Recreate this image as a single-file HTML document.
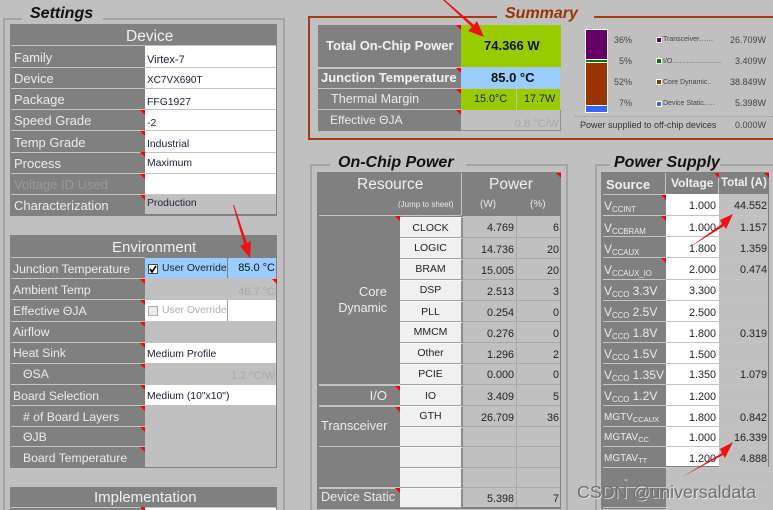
<!DOCTYPE html>
<html><head><meta charset="utf-8"><style>
html,body{margin:0;padding:0;background:#c0c0c0}
#p{position:absolute;left:0;top:0;width:773px;height:510px;overflow:hidden;background:#c0c0c0;font-family:"Liberation Sans",sans-serif;filter:blur(.3px)}
#p div{position:absolute;white-space:nowrap;box-sizing:border-box}
.g{border:2px solid #a4a4a4}
.h{background:#808080}
.w{background:#fff}
.s{background:#c4c4c4;height:1px}
.v{background:#c4c4c4;width:1px}
.ti{font:italic bold 16px/18px "Liberation Sans",sans-serif;color:#111;background:#c0c0c0;padding:0 8px}
.hd{color:#f0f0f0;font-size:15.5px;line-height:18px}
.l{color:#ececec;font-size:13px;line-height:16px;margin-top:-8px}
.e{font-size:12.2px}
.d{color:#20203a;font-size:10.4px;line-height:14px;margin-top:-7px}
.n{color:#222;font-size:10.8px;line-height:14px;margin-top:-7px;text-align:right}
.q{color:#a8a8a8;font-size:11px;line-height:14px;margin-top:-7px}
.c{width:0;height:0;border-left:5px solid transparent;border-top:5px solid #f00}
.bt{background:#f0f0f0;border-right:2px solid #8c8c8c;border-bottom:1px solid #a0a0a0;border-top:1px solid #fafafa;color:#222;font-size:10.5px;text-align:center;left:400px;width:63px}
.sl{color:#ececec;font-size:12px;line-height:16px;margin-top:-8px;left:604px}
.sl sub{font-size:7.8px;line-height:0;vertical-align:-2px}
.m{font-size:10px}
.m sub{font-size:7.5px}
.k{font-size:7px;line-height:10px;margin-top:-5px;color:#444;left:663px}
.p{font-size:9px;line-height:14px;margin-top:-7px;color:#444;text-align:right}
.dot{left:656px;border:1px solid #fff;width:6px;height:6px}
</style></head><body><div id="p">

<!-- Settings group -->
<div class="g" style="left:3px;top:18px;width:282px;height:500px"></div>
<div class="ti" style="left:22px;top:5px;padding-right:10px">Settings</div>

<!-- Device -->
<div class="h" style="left:10px;top:24px;width:267px;height:192px"></div>
<div class="hd" style="left:126px;top:28px">Device</div>
<div class="w" style="left:145px;top:46px;width:131px;height:127px"></div>
<div class="w" style="left:145px;top:173px;width:131px;height:21px"></div>
<div style="left:145px;top:195px;width:131px;height:19px;background:#c0c0c0"></div>
<div class="s" style="left:11px;top:45px;width:265px"></div>
<div class="s" style="left:11px;top:67px;width:265px"></div>
<div class="s" style="left:11px;top:88px;width:265px"></div>
<div class="s" style="left:11px;top:109px;width:265px"></div>
<div class="s" style="left:11px;top:130px;width:265px"></div>
<div class="s" style="left:11px;top:152px;width:265px"></div>
<div class="s" style="left:11px;top:173px;width:265px"></div>
<div class="s" style="left:11px;top:194px;width:265px"></div>
<div class="l" style="left:14px;top:58px">Family</div>
<div class="l" style="left:14px;top:79px">Device</div>
<div class="l" style="left:14px;top:100px">Package</div>
<div class="l" style="left:14px;top:121px">Speed Grade</div>
<div class="l" style="left:14px;top:143px">Temp Grade</div>
<div class="l" style="left:14px;top:164px">Process</div>
<div class="l" style="left:14px;top:185px;color:#999">Voltage ID Used</div>
<div class="l" style="left:14px;top:206px">Characterization</div>
<div class="d" style="left:147px;top:60px;font-size:11px">Virtex-7</div>
<div class="d" style="left:147px;top:81px;font-size:10px">XC7VX690T</div>
<div class="d" style="left:147px;top:103px">FFG1927</div>
<div class="d" style="left:147px;top:124px">-2</div>
<div class="d" style="left:147px;top:145px">Industrial</div>
<div class="d" style="left:147px;top:164px">Maximum</div>
<div class="d" style="left:147px;top:204px">Production</div>
<div class="c" style="left:140px;top:110px"></div>
<div class="c" style="left:140px;top:131px"></div>
<div class="c" style="left:140px;top:152px"></div>
<div class="c" style="left:140px;top:174px"></div>
<div class="c" style="left:140px;top:195px"></div>

<!-- Environment -->
<div class="h" style="left:10px;top:235px;width:267px;height:233px"></div>
<div class="hd" style="left:112px;top:239px;font-size:15px">Environment</div>
<div style="left:145px;top:258px;width:131px;height:209px;background:#c0c0c0"></div>
<div style="left:145px;top:258px;width:131px;height:20px;background:#99ccff"></div>
<div class="v" style="left:227px;top:258px;height:20px;background:#808080"></div>
<div class="w" style="left:145px;top:300px;width:131px;height:21px"></div>
<div class="v" style="left:227px;top:300px;height:21px;background:#a0a0a0"></div>
<div class="w" style="left:145px;top:343px;width:131px;height:20px"></div>
<div class="w" style="left:145px;top:385px;width:131px;height:20px"></div>
<div class="s" style="left:11px;top:257px;width:134px"></div>
<div class="s" style="left:11px;top:278px;width:134px"></div>
<div class="s" style="left:11px;top:299px;width:134px"></div>
<div class="s" style="left:11px;top:321px;width:134px"></div>
<div class="s" style="left:11px;top:342px;width:134px"></div>
<div class="s" style="left:11px;top:363px;width:134px"></div>
<div class="s" style="left:11px;top:384px;width:134px"></div>
<div class="s" style="left:11px;top:405px;width:134px"></div>
<div class="s" style="left:11px;top:426px;width:134px"></div>
<div class="s" style="left:11px;top:446px;width:134px"></div>
<div class="l e" style="left:13px;top:269px">Junction Temperature</div>
<div class="l e" style="left:13px;top:290px">Ambient Temp</div>
<div class="l e" style="left:13px;top:311px">Effective ΘJA</div>
<div class="l e" style="left:13px;top:332px">Airflow</div>
<div class="l e" style="left:13px;top:353px">Heat Sink</div>
<div class="l e" style="left:23px;top:374px">ΘSA</div>
<div class="l e" style="left:13px;top:396px">Board Selection</div>
<div class="l e" style="left:23px;top:417px"># of Board Layers</div>
<div class="l e" style="left:23px;top:437px">ΘJB</div>
<div class="l e" style="left:23px;top:458px">Board Temperature</div>
<div style="left:148px;top:264px;width:10px;height:10px;background:#fff;border:1px solid #444"></div>
<svg style="position:absolute;left:148px;top:264px" width="10" height="10"><path d="M2 5l2 3 4-6" fill="none" stroke="#000" stroke-width="1.6"/></svg>
<div class="d" style="left:162px;top:269px;color:#222">User Override</div>
<div class="d" style="right:498px;top:268px;font-size:11px;color:#111">85.0 °C</div>
<div class="q" style="right:498px;top:292px">46.7 °C</div>
<div style="left:148px;top:306px;width:10px;height:10px;background:#ececec;border:1px solid #b0b0b0"></div>
<div class="d" style="left:162px;top:311px;color:#a8b0b0">User Override</div>
<div class="d" style="left:147px;top:355px">Medium Profile</div>
<div class="q" style="right:498px;top:376px">1.2 °C/W</div>
<div class="d" style="left:147px;top:397px">Medium (10"x10")</div>
<div class="c" style="left:140px;top:279px"></div>
<div class="c" style="left:140px;top:300px"></div>
<div class="c" style="left:140px;top:322px"></div>
<div class="c" style="left:140px;top:343px"></div>
<div class="c" style="left:140px;top:364px"></div>
<div class="c" style="left:140px;top:385px"></div>
<div class="c" style="left:140px;top:406px"></div>
<div class="c" style="left:140px;top:427px"></div>
<div class="c" style="left:140px;top:447px"></div>
<div class="c" style="left:272px;top:279px"></div>

<!-- Implementation -->
<div class="h" style="left:10px;top:487px;width:267px;height:30px"></div>
<div class="hd" style="left:94px;top:489px;font-size:15px">Implementation</div>
<div class="s" style="left:11px;top:507px;width:265px"></div>
<div class="w" style="left:145px;top:508px;width:131px;height:3px"></div>
<div class="c" style="left:140px;top:507px"></div>

<!-- Summary -->
<div style="left:308px;top:16px;width:480px;height:124px;border:2px solid #a23c12"></div>
<div class="ti" style="left:497px;top:5px;color:#993300;padding-right:16px">Summary</div>
<div class="h" style="left:318px;top:25px;width:143px;height:106px"></div>
<div style="left:461px;top:25px;width:100px;height:42px;background:#99cc00"></div>
<div style="left:461px;top:68px;width:99px;height:20px;background:#99ccff"></div>
<div style="left:461px;top:89px;width:55px;height:21px;background:#99cc00"></div>
<div style="left:517px;top:89px;width:43px;height:21px;background:#99cc00"></div>
<div style="left:461px;top:110px;width:100px;height:21px;background:#c0c0c0;border-right:1px solid #909090;border-bottom:1px solid #909090"></div>
<div class="s" style="left:318px;top:67px;width:143px;height:2px"></div>
<div class="s" style="left:318px;top:88px;width:143px"></div>
<div class="s" style="left:318px;top:109px;width:143px"></div>
<div style="left:326px;top:37px;color:#f2f2f2;font:bold 13px/18px 'Liberation Sans',sans-serif">Total On-Chip Power</div>
<div style="left:321px;top:69px;color:#f2f2f2;font:bold 13px/18px 'Liberation Sans',sans-serif">Junction Temperature</div>
<div class="l" style="left:331px;top:99px;font-size:12.6px">Thermal Margin</div>
<div class="l" style="left:330px;top:120px;font-size:12px">Effective ΘJA</div>
<div style="left:484px;top:37px;color:#111;font:bold 13px/18px 'Liberation Sans',sans-serif">74.366 W</div>
<div style="left:491px;top:69px;color:#111;font:bold 13px/18px 'Liberation Sans',sans-serif">85.0 °C</div>
<div class="n" style="left:474px;top:99px;color:#223">15.0°C</div>
<div class="n" style="left:524px;top:99px;color:#223">17.7W</div>
<div class="q" style="right:214px;top:124px">0.8 °C/W</div>
<div class="c" style="left:456px;top:25px"></div>
<div class="c" style="left:456px;top:68px"></div>
<div class="c" style="left:456px;top:89px"></div>
<div class="c" style="left:456px;top:110px"></div>

<!-- chart -->
<div style="left:585px;top:29px;width:23px;height:84px;background:#fff"></div>
<div style="left:586px;top:30px;width:21px;height:29px;background:#660066"></div>
<div style="left:586px;top:60px;width:21px;height:2px;background:#007a00"></div>
<div style="left:586px;top:63px;width:21px;height:42px;background:#993300"></div>
<div style="left:586px;top:106px;width:21px;height:6px;background:#3366ff"></div>
<div class="p" style="right:141px;top:40px">36%</div>
<div class="p" style="right:141px;top:61px">5%</div>
<div class="p" style="right:141px;top:82px">52%</div>
<div class="p" style="right:141px;top:103px">7%</div>
<div class="dot" style="top:37px;background:#660066"></div>
<div class="dot" style="top:58px;background:#007a00"></div>
<div class="dot" style="top:79px;background:#993300"></div>
<div class="dot" style="top:101px;background:#3366ff"></div>
<div class="k" style="top:40px">Transceiver……</div>
<div class="k" style="top:62px">I/O…………………</div>
<div class="k" style="top:83px">Core Dynamic..</div>
<div class="k" style="top:104px">Device Static.….</div>
<div class="p" style="right:7px;top:40px">26.709W</div>
<div class="p" style="right:7px;top:61px">3.409W</div>
<div class="p" style="right:7px;top:82px">38.849W</div>
<div class="p" style="right:7px;top:103px">5.398W</div>
<div style="left:575px;top:116px;width:198px;height:1px;border-top:1px dotted #999"></div>
<div style="left:580px;top:118px;font-size:9px;line-height:14px;color:#333">Power supplied to off-chip devices</div>
<div class="p" style="right:7px;top:125px">0.000W</div>

<!-- On-Chip Power -->
<div class="g" style="left:310px;top:164px;width:258px;height:360px"></div>
<div class="ti" style="left:330px;top:154px;padding-right:12px">On-Chip Power</div>
<div class="h" style="left:317px;top:172px;width:244px;height:337px"></div>
<div class="v" style="left:461px;top:173px;height:42px"></div>
<div class="s" style="left:319px;top:215px;width:142px"></div>
<div class="hd" style="left:357px;top:176px">Resource</div>
<div class="hd" style="left:489px;top:176px">Power</div>
<div style="left:398px;top:199px;font-size:8px;line-height:12px;color:#e8e8e8">(Jump to sheet)</div>
<div style="left:480px;top:198px;font-size:10px;line-height:14px;color:#e8e8e8">(W)</div>
<div style="left:530px;top:198px;font-size:10px;line-height:14px;color:#e8e8e8">(%)</div>
<div style="left:463px;top:216px;width:97px;height:291px;background:#c0c0c0"></div>
<div class="v" style="left:516px;top:216px;height:291px;background:#a8a8a8"></div>
<div style="left:463px;top:237px;width:97px;height:1px;background:#a8a8a8"></div>
<div style="left:463px;top:258px;width:97px;height:1px;background:#a8a8a8"></div>
<div style="left:463px;top:279px;width:97px;height:1px;background:#a8a8a8"></div>
<div style="left:463px;top:300px;width:97px;height:1px;background:#a8a8a8"></div>
<div style="left:463px;top:321px;width:97px;height:1px;background:#a8a8a8"></div>
<div style="left:463px;top:342px;width:97px;height:1px;background:#a8a8a8"></div>
<div style="left:463px;top:363px;width:97px;height:1px;background:#a8a8a8"></div>
<div style="left:463px;top:384px;width:97px;height:1px;background:#a8a8a8"></div>
<div style="left:463px;top:405px;width:97px;height:1px;background:#a8a8a8"></div>
<div style="left:463px;top:426px;width:97px;height:1px;background:#a8a8a8"></div>
<div style="left:463px;top:446px;width:97px;height:1px;background:#a8a8a8"></div>
<div style="left:463px;top:467px;width:97px;height:1px;background:#a8a8a8"></div>
<div style="left:463px;top:487px;width:97px;height:1px;background:#a8a8a8"></div>

<div class="bt" style="top:217px;height:21px;line-height:21px">CLOCK</div>
<div class="bt" style="top:238px;height:21px;line-height:19px">LOGIC</div>
<div class="bt" style="top:259px;height:21px;line-height:19px">BRAM</div>
<div class="bt" style="top:280px;height:21px;line-height:19px">DSP</div>
<div class="bt" style="top:301px;height:21px;line-height:21px">PLL</div>
<div class="bt" style="top:322px;height:21px;line-height:19px">MMCM</div>
<div class="bt" style="top:343px;height:21px;line-height:19px">Other</div>
<div class="bt" style="top:364px;height:21px;line-height:19px">PCIE</div>
<div class="bt" style="top:385px;height:21px;line-height:21px">IO</div>
<div class="bt" style="top:406px;height:21px;line-height:19px">GTH</div>
<div class="bt" style="top:427px;height:20px"></div>
<div class="bt" style="top:447px;height:21px"></div>
<div class="bt" style="top:468px;height:20px"></div>
<div class="bt" style="top:488px;height:20px"></div>

<div class="s" style="left:319px;top:384px;width:81px;height:2px"></div>
<div class="s" style="left:319px;top:405px;width:81px;height:2px"></div>
<div class="s" style="left:319px;top:446px;width:81px"></div>
<div class="s" style="left:319px;top:487px;width:81px;height:2px"></div>
<div class="l" style="right:386px;top:292px">Core</div>
<div class="l" style="right:386px;top:308px;font-size:12.5px">Dynamic</div>
<div class="l" style="right:386px;top:396px">I/O</div>
<div class="l" style="left:321px;top:426px;font-size:12.8px">Transceiver</div>
<div class="l" style="left:321px;top:497px;font-size:12.7px">Device Static</div>
<div class="c" style="left:395px;top:216px"></div>
<div class="c" style="left:395px;top:386px"></div>
<div class="c" style="left:395px;top:407px"></div>
<div class="c" style="left:395px;top:488px"></div>
<div class="c" style="left:556px;top:173px"></div>

<div class="n" style="right:259px;top:228px">4.769</div><div class="n" style="right:214px;top:228px">6</div>
<div class="n" style="right:259px;top:250px">14.736</div><div class="n" style="right:214px;top:250px">20</div>
<div class="n" style="right:259px;top:271px">15.005</div><div class="n" style="right:214px;top:271px">20</div>
<div class="n" style="right:259px;top:292px">2.513</div><div class="n" style="right:214px;top:292px">3</div>
<div class="n" style="right:259px;top:313px">0.254</div><div class="n" style="right:214px;top:313px">0</div>
<div class="n" style="right:259px;top:334px">0.276</div><div class="n" style="right:214px;top:334px">0</div>
<div class="n" style="right:259px;top:355px">1.296</div><div class="n" style="right:214px;top:355px">2</div>
<div class="n" style="right:259px;top:375px">0.000</div><div class="n" style="right:214px;top:375px">0</div>
<div class="n" style="right:259px;top:397px">3.409</div><div class="n" style="right:214px;top:397px">5</div>
<div class="n" style="right:259px;top:418px">26.709</div><div class="n" style="right:214px;top:418px">36</div>
<div class="n" style="right:259px;top:499px">5.398</div><div class="n" style="right:214px;top:499px">7</div>

<!-- Power Supply -->
<div class="g" style="left:595px;top:164px;width:200px;height:360px"></div>
<div class="ti" style="left:610px;top:154px;padding:0 0 0 4px">Power Supply</div>
<div class="h" style="left:601px;top:172px;width:168px;height:337px"></div>
<div class="w" style="left:666px;top:194px;width:53px;height:272px"></div>
<div style="left:666px;top:467px;width:103px;height:42px;background:#c0c0c0"></div>
<div style="left:719px;top:194px;width:49px;height:313px;background:#c0c0c0"></div>
<div class="v" style="left:665px;top:173px;height:21px"></div>
<div class="v" style="left:718px;top:173px;height:21px"></div>
<div class="s" style="left:603px;top:194px;width:63px"></div>
<div class="s" style="left:603px;top:215px;width:165px"></div>
<div class="s" style="left:603px;top:236px;width:165px"></div>
<div class="s" style="left:603px;top:257px;width:165px"></div>
<div class="s" style="left:603px;top:279px;width:165px"></div>
<div class="s" style="left:603px;top:300px;width:165px"></div>
<div class="s" style="left:603px;top:321px;width:165px"></div>
<div class="s" style="left:603px;top:342px;width:165px"></div>
<div class="s" style="left:603px;top:363px;width:165px"></div>
<div class="s" style="left:603px;top:384px;width:165px"></div>
<div class="s" style="left:603px;top:405px;width:165px"></div>
<div class="s" style="left:603px;top:426px;width:165px"></div>
<div class="s" style="left:603px;top:446px;width:165px"></div>
<div class="s" style="left:603px;top:467px;width:165px"></div>
<div class="s" style="left:603px;top:487px;width:165px"></div>
<div class="s" style="left:603px;top:507px;width:165px"></div>
<div style="left:606px;top:177px;font:bold 13px/16px 'Liberation Sans',sans-serif;color:#f0f0f0">Source</div>
<div style="left:671px;top:175px;font:bold 12px/16px 'Liberation Sans',sans-serif;color:#f0f0f0">Voltage</div>
<div style="left:721px;top:175px;font:bold 11.5px/16px 'Liberation Sans',sans-serif;color:#f0f0f0">Total (A)</div>
<div class="sl" style="top:206px">V<sub>CCINT</sub></div>
<div class="sl" style="top:228px">V<sub>CCBRAM</sub></div>
<div class="sl" style="top:249px">V<sub>CCAUX</sub></div>
<div class="sl" style="top:270px">V<sub>CCAUX_IO</sub></div>
<div class="sl" style="top:291px">V<sub>CCO</sub> 3.3V</div>
<div class="sl" style="top:312px">V<sub>CCO</sub> 2.5V</div>
<div class="sl" style="top:333px">V<sub>CCO</sub> 1.8V</div>
<div class="sl" style="top:354px">V<sub>CCO</sub> 1.5V</div>
<div class="sl" style="top:375px">V<sub>CCO</sub> 1.35V</div>
<div class="sl" style="top:396px">V<sub>CCO</sub> 1.2V</div>
<div class="sl m" style="top:418px">MGTV<sub>CCAUX</sub></div>
<div class="sl m" style="top:438px">MGTAV<sub>CC</sub></div>
<div class="sl m" style="top:459px">MGTAV<sub>TT</sub></div>
<div class="l" style="left:624px;top:480px;font-size:11px">-</div>
<div class="c" style="left:661px;top:195px"></div>
<div class="c" style="left:661px;top:216px"></div>
<div class="c" style="left:661px;top:258px"></div>
<div class="c" style="left:714px;top:173px"></div>
<div class="c" style="left:764px;top:173px"></div>
<div class="n" style="right:57px;top:206px">1.000</div><div class="n" style="right:6px;top:206px">44.552</div>
<div class="n" style="right:57px;top:228px">1.000</div><div class="n" style="right:6px;top:228px">1.157</div>
<div class="n" style="right:57px;top:249px">1.800</div><div class="n" style="right:6px;top:249px">1.359</div>
<div class="n" style="right:57px;top:270px">2.000</div><div class="n" style="right:6px;top:270px">0.474</div>
<div class="n" style="right:57px;top:291px">3.300</div>
<div class="n" style="right:57px;top:313px">2.500</div>
<div class="n" style="right:57px;top:334px">1.800</div><div class="n" style="right:6px;top:334px">0.319</div>
<div class="n" style="right:57px;top:355px">1.500</div>
<div class="n" style="right:57px;top:375px">1.350</div><div class="n" style="right:6px;top:375px">1.079</div>
<div class="n" style="right:57px;top:397px">1.200</div>
<div class="n" style="right:57px;top:418px">1.800</div><div class="n" style="right:6px;top:418px">0.842</div>
<div class="n" style="right:57px;top:438px">1.000</div><div class="n" style="right:6px;top:438px">16.339</div>
<div class="n" style="right:57px;top:459px">1.200</div><div class="n" style="right:6px;top:459px">4.888</div>

<!-- arrows -->
<svg style="position:absolute;left:0;top:0" width="773" height="510">
<g fill="#f01010">
<path d="M443 0L445 0L474 25L477 21L484 37L468 31L472 27Z"/>
<path d="M233 205L234 205L247 243L251 241L250 258L240 246L244 244Z"/>
<path d="M690 247L722 224L720 220L733 214L726 229L724 226Z"/>
<path d="M682 477L722 453L720 449L733 442L725 458L723 455Z"/>
</g>
</svg>

<!-- watermark -->
<div style="left:577px;top:482px;font-size:17.8px;line-height:20px;color:#6e6e6e;text-shadow:1px 1px 0 rgba(255,255,255,.6)">CSDN @universaldata</div>
</div></body></html>
